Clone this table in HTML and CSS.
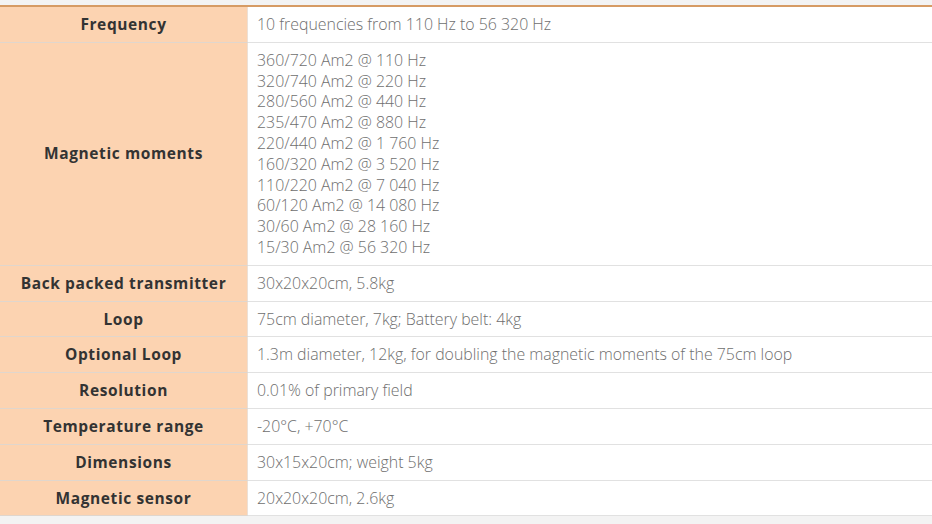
FILE: index.html
```html
<!DOCTYPE html>
<html>
<head>
<meta charset="utf-8">
<link rel="stylesheet" href="styles.css">
</head>
<body>
<div class="wrap">
<table class="specs">
  <tr><th>Frequency</th><td>10 frequencies from 110 Hz to 56 320 Hz</td></tr>
  <tr><th>Magnetic moments</th><td>360/720 Am2 @ 110 Hz<br>320/740 Am2 @ 220 Hz<br>280/560 Am2 @ 440 Hz<br>235/470 Am2 @ 880 Hz<br>220/440 Am2 @ 1 760 Hz<br>160/320 Am2 @ 3 520 Hz<br>110/220 Am2 @ 7 040 Hz<br>60/120 Am2 @ 14 080 Hz<br>30/60 Am2 @ 28 160 Hz<br>15/30 Am2 @ 56 320 Hz</td></tr>
  <tr><th>Back packed transmitter</th><td>30x20x20cm, 5.8kg</td></tr>
  <tr><th>Loop</th><td>75cm diameter, 7kg; Battery belt: 4kg</td></tr>
  <tr><th>Optional Loop</th><td>1.3m diameter, 12kg, for doubling the magnetic moments of the 75cm loop</td></tr>
  <tr><th>Resolution</th><td>0.01% of primary field</td></tr>
  <tr><th>Temperature range</th><td>-20°C, +70°C</td></tr>
  <tr><th>Dimensions</th><td>30x15x20cm; weight 5kg</td></tr>
  <tr><th>Magnetic sensor</th><td>20x20x20cm, 2.6kg</td></tr>
</table>
</div>
</body>
</html>
```
FILE: styles.css
```css
html, body {
  margin: 0;
  padding: 0;
  background: #f3f3f3;
}
.wrap {
  padding-top: 5px;
}
.specs {
  width: 100%;
  border-collapse: collapse;
  border-top: 2px solid #d69b64;
  background: #fff;
}
.specs th, .specs td {
  padding: 7px 9px;
  line-height: 20.8px;
  border-bottom: 1px solid rgba(215, 215, 215, 0.75);
  vertical-align: middle;
}
.specs th {
  width: 229px;
  background: #fcd3b1;
  color: #333;
  font-family: "Open Sans", sans-serif;
  font-weight: 700;
  font-size: 15.5px;
  letter-spacing: 0.6px;
  text-align: center;
  border-right: 1px solid rgba(230, 230, 230, 0.7);
}
.specs td {
  color: #6e6e6e;
  font-family: "Open Sans", sans-serif;
  font-weight: 300;
  font-size: 15.9px;
  text-align: left;
}
```
